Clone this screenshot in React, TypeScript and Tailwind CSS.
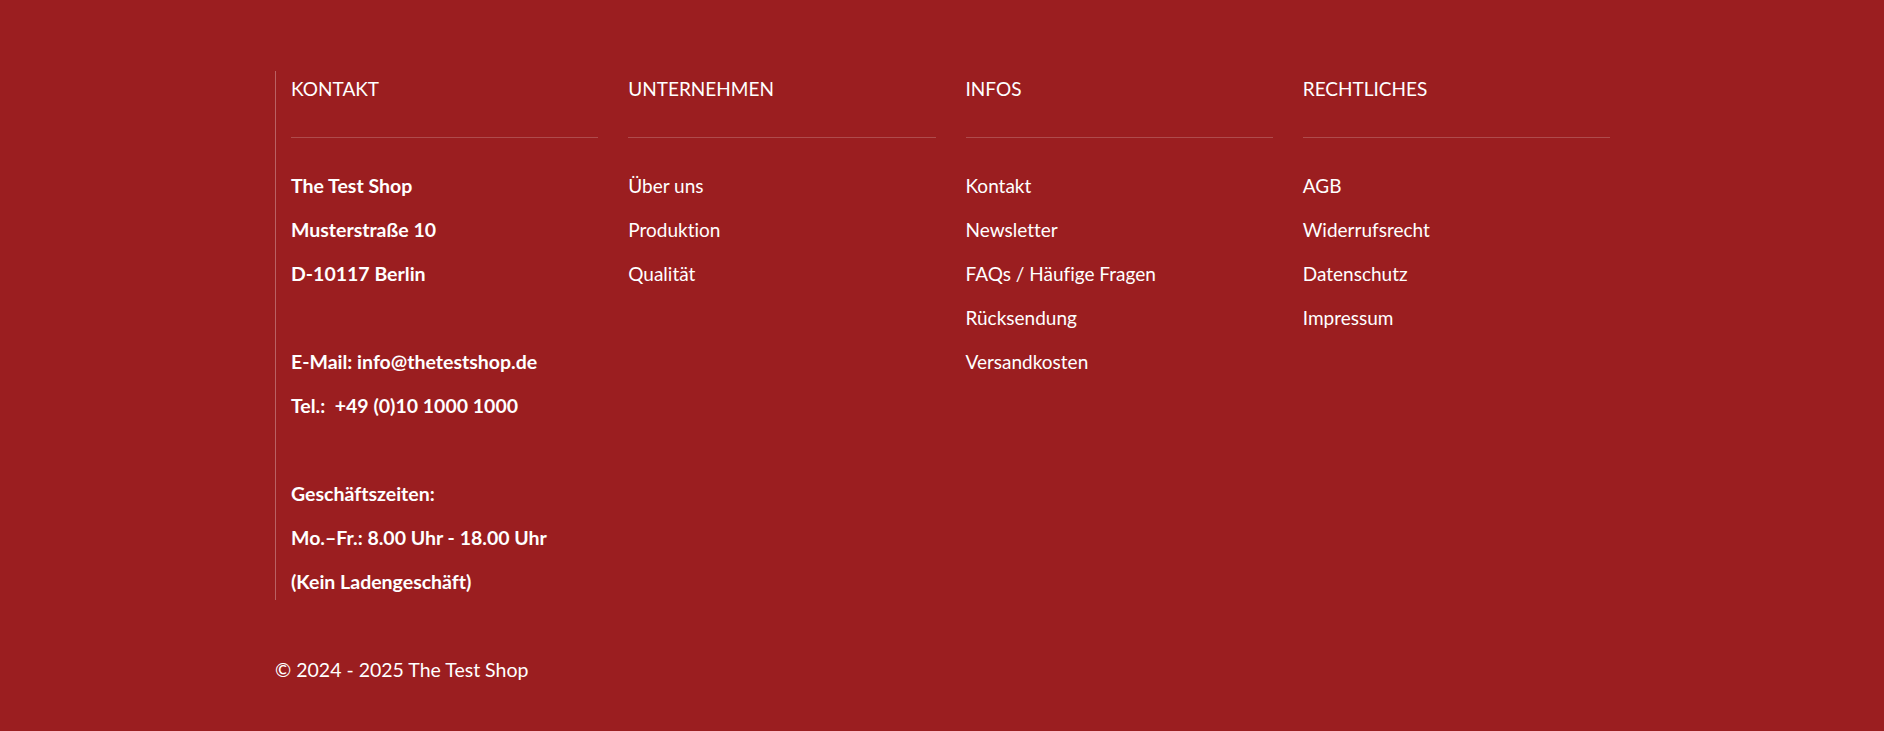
import React from "react";

const columns = [
  {
    title: "KONTAKT",
    bold: true,
    items: [
      "The Test Shop",
      "Musterstraße 10",
      "D-10117 Berlin",
      "",
      "E-Mail: info@thetestshop.de",
      "Tel.:  +49 (0)10 1000 1000",
      "",
      "Geschäftszeiten:",
      "Mo.–Fr.: 8.00 Uhr - 18.00 Uhr",
      "(Kein Ladengeschäft)",
    ],
  },
  { title: "UNTERNEHMEN", bold: false, items: ["Über uns", "Produktion", "Qualität"] },
  {
    title: "INFOS",
    bold: false,
    items: ["Kontakt", "Newsletter", "FAQs / Häufige Fragen", "Rücksendung", "Versandkosten"],
  },
  {
    title: "RECHTLICHES",
    bold: false,
    items: ["AGB", "Widerrufsrecht", "Datenschutz", "Impressum"],
  },
];

const App = () => {
  return (
    <div className="min-h-screen bg-[#9b1e20] pt-[71px] font-['Lato',sans-serif] text-white [font-variant-ligatures:none]">
      <div className="ml-[275px] w-[1350px]">
        <div className="grid grid-cols-4 border-l border-white/30">
          {columns.map((col) => (
            <div key={col.title} className="px-[15px]">
              <h3 className="text-[19px] leading-[36px]">{col.title}</h3>
              <div className="mt-[30px] border-t border-white/20" />
              <ul className="mt-[30px] flex flex-col gap-[8px]">
                {col.items.map((item, i) => (
                  <li
                    key={i}
                    className={`h-[36px] whitespace-pre leading-[36px] ${
                      col.bold ? "text-[19.5px] font-bold" : "text-[19px]"
                    }`}
                  >
                    {item}
                  </li>
                ))}
              </ul>
            </div>
          ))}
        </div>
        <p className="mt-[52px] text-[19.5px] leading-[36px]">© 2024 - 2025 The Test Shop</p>
      </div>
    </div>
  );
};

export default App;
